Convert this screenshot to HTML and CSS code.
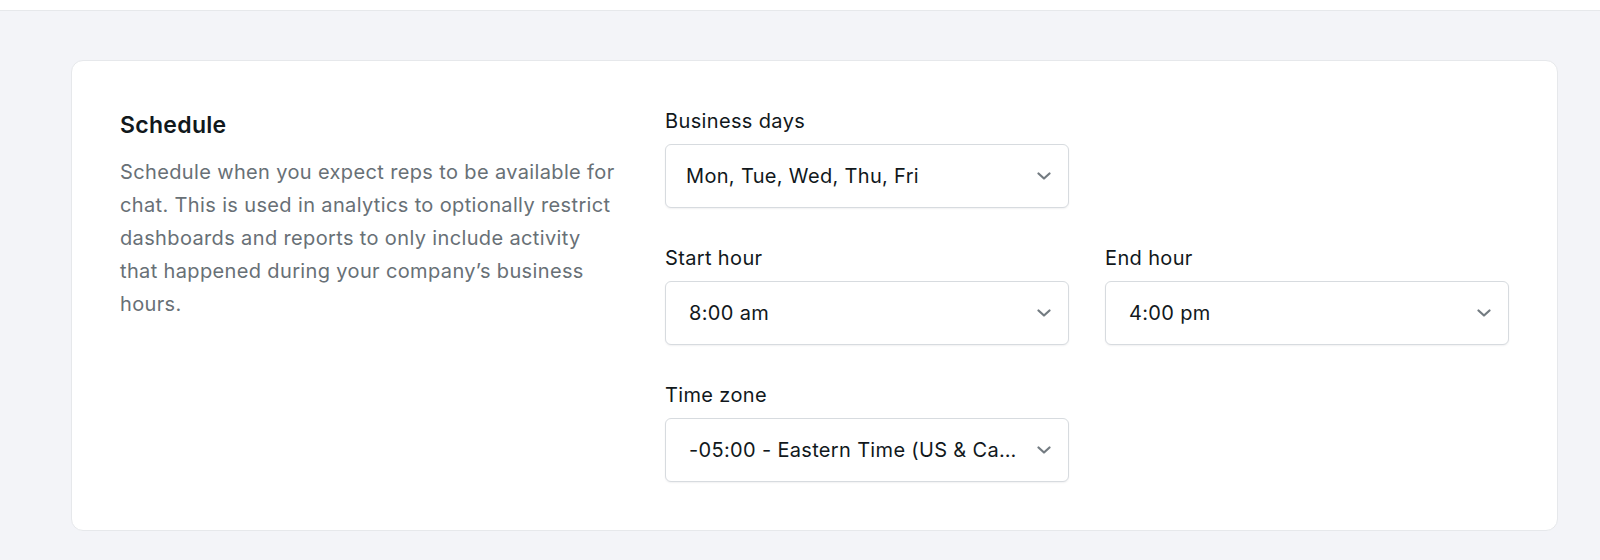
FILE: index.html
```html
<!DOCTYPE html>
<html lang="en">
<head>
<meta charset="utf-8">
<title>Schedule settings</title>
<link rel="stylesheet" href="styles.css">
</head>
<body>
<header class="topbar"></header>
<main class="page">
  <section class="card">
    <div class="intro">
      <h2 class="intro-title">Schedule</h2>
      <p class="intro-text">Schedule when you expect reps to be available for chat. This is used in analytics to optionally restrict dashboards and reports to only include activity that happened during your company’s business hours.</p>
    </div>
    <div class="fields">
      <div class="field">
        <label class="field-label">Business days</label>
        <div class="select select-multi">
          <span class="select-value">Mon, Tue, Wed, Thu, Fri</span>
          <svg class="chevron" viewBox="0 0 14 8" width="14" height="8"><path d="M1.5 1.5 L7 6.5 L12.5 1.5" fill="none" stroke="currentColor" stroke-width="2.2" stroke-linecap="round" stroke-linejoin="round"/></svg>
        </div>
      </div>
      <div class="field-spacer"></div>
      <div class="field">
        <label class="field-label">Start hour</label>
        <div class="select">
          <span class="select-value">8:00 am</span>
          <svg class="chevron" viewBox="0 0 14 8" width="14" height="8"><path d="M1.5 1.5 L7 6.5 L12.5 1.5" fill="none" stroke="currentColor" stroke-width="2.2" stroke-linecap="round" stroke-linejoin="round"/></svg>
        </div>
      </div>
      <div class="field">
        <label class="field-label">End hour</label>
        <div class="select">
          <span class="select-value">4:00 pm</span>
          <svg class="chevron" viewBox="0 0 14 8" width="14" height="8"><path d="M1.5 1.5 L7 6.5 L12.5 1.5" fill="none" stroke="currentColor" stroke-width="2.2" stroke-linecap="round" stroke-linejoin="round"/></svg>
        </div>
      </div>
      <div class="field">
        <label class="field-label">Time zone</label>
        <div class="select">
          <span class="select-value">-05:00 - Eastern Time (US &amp; Canada)</span>
          <svg class="chevron" viewBox="0 0 14 8" width="14" height="8"><path d="M1.5 1.5 L7 6.5 L12.5 1.5" fill="none" stroke="currentColor" stroke-width="2.2" stroke-linecap="round" stroke-linejoin="round"/></svg>
        </div>
      </div>
    </div>
  </section>
</main>
</body>
</html>
```

FILE: styles.css
```css
* { box-sizing: border-box; }

html, body {
  margin: 0;
  padding: 0;
}

body {
  font-family: Inter, "Noto Sans", "Liberation Sans", sans-serif;
  background: #f3f4f8;
  color: #11181c;
  height: 560px;
  overflow: hidden;
}

.topbar {
  height: 11px;
  background: #ffffff;
  border-bottom: 1px solid #e6e8eb;
}

.page {
  padding: 49px 42px 0 71px;
}

.card {
  display: flex;
  gap: 48px;
  background: #ffffff;
  border: 1px solid #e6e8eb;
  border-radius: 12px;
  padding: 48px;
}

.intro {
  width: 497px;
  flex: none;
}

.intro-title {
  margin: 0;
  font-size: 23px;
  line-height: 32px;
  font-weight: 600;
  letter-spacing: 0.3px;
  color: #11181c;
}

.intro-text {
  margin: 15px 0 0;
  font-size: 20px;
  line-height: 33px;
  letter-spacing: 0.36px;
  color: #687076;
}

.fields {
  flex: 1;
  display: grid;
  grid-template-columns: 1fr 1fr;
  column-gap: 36px;
  row-gap: 38px;
}

.field {
  display: flex;
  flex-direction: column;
  min-width: 0;
}

.field-label {
  font-size: 20px;
  line-height: 24px;
  letter-spacing: 0.36px;
  margin-bottom: 11px;
  color: #11181c;
}

.select {
  height: 64px;
  display: flex;
  align-items: center;
  gap: 12px;
  padding: 0 17px 0 23px;
  border: 1px solid #d7dbdf;
  border-radius: 6px;
  background: #ffffff;
  box-shadow: 0 1px 2px rgba(16, 24, 40, 0.06);
}

.select-multi {
  padding-left: 20px;
}

.select-value {
  flex: 1;
  min-width: 0;
  font-size: 20px;
  line-height: 28px;
  letter-spacing: 0.33px;
  color: #11181c;
  white-space: nowrap;
  overflow: hidden;
  text-overflow: ellipsis;
}

.chevron {
  flex: none;
  color: #737b81;
}
```
